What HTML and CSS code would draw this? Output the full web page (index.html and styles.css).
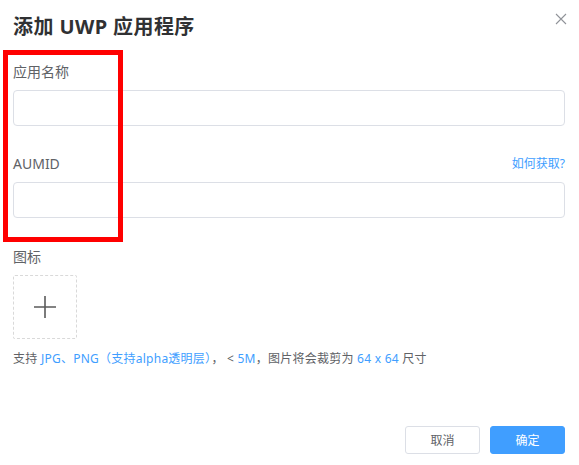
FILE: index.html
```html
<!DOCTYPE html>
<html lang="zh-CN">
<head>
    <meta charset="UTF-8">
    <meta name="viewport" content="width=device-width, initial-scale=1.0">
    <title>添加 UWP 应用程序</title>
    <link rel="stylesheet" href="styles.css">
</head>
<body>

    <div class="dialog">
        <div class="dialog-header">
            <h2 class="dialog-title">添加 UWP 应用程序</h2>
            <button class="close-btn" aria-label="关闭">
                <svg width="12" height="12" viewBox="0 0 12 12">
                    <path d="M1 1 L11 11 M11 1 L1 11" stroke="#909399" stroke-width="1.1" fill="none"/>
                </svg>
            </button>
        </div>

        <div class="form-item">
            <div class="form-label">应用名称</div>
            <input type="text" class="text-input">
        </div>

        <div class="form-item">
            <div class="form-label">
                <span>AUMID</span>
                <a href="#" class="help-link">如何获取?</a>
            </div>
            <input type="text" class="text-input">
        </div>

        <div class="form-item icon-item">
            <div class="form-label">图标</div>
            <div class="uploader">
                <svg width="24" height="24" viewBox="0 0 24 24">
                    <path d="M12 1 V23 M1 12 H23" stroke="#5b5b5b" stroke-width="1.6" fill="none"/>
                </svg>
            </div>
            <p class="tip">支持 <span class="hl">JPG、PNG（支持alpha透明层）</span>， &lt; <span class="hl">5M</span>，图片将会裁剪为 <span class="hl">64 x 64</span> 尺寸</p>
        </div>

        <div class="dialog-footer">
            <button class="btn">取消</button>
            <button class="btn btn-primary">确定</button>
        </div>

        <!-- annotation box -->
        <div class="mark"></div>
    </div>

</body>
</html>
```

FILE: styles.css
```css
body {
    margin: 0;
    padding: 0;
    background: #fff;
    font-family: "Noto Sans", "Noto Sans CJK SC", sans-serif;
    color: #606266;
}
.dialog {
    position: relative;
    padding: 12px 14px 0 13px;
}
.dialog-header {
    display: flex;
    justify-content: space-between;
    align-items: flex-start;
}
.dialog-title {
    margin: 0;
    font-size: 20px;
    line-height: 29px;
    font-weight: bold;
    letter-spacing: 0.4px;
    color: #303133;
}
.close-btn {
    margin: 1px -3px 0 0;
    padding: 0;
    width: 14px;
    height: 14px;
    border: none;
    background: none;
    cursor: pointer;
}
.form-item {
    margin-top: 21px;
}
.form-item + .form-item {
    margin-top: 28px;
}
.form-item.icon-item {
    margin-top: 29px;
}
.form-label {
    display: flex;
    justify-content: space-between;
    align-items: center;
    font-size: 14px;
    line-height: 20px;
    margin-bottom: 8px;
    color: #606266;
}
.help-link {
    color: #409eff;
    font-size: 12px;
    text-decoration: none;
}
.text-input {
    display: block;
    box-sizing: border-box;
    width: 100%;
    height: 36px;
    border: 1px solid #dcdfe6;
    border-radius: 4px;
    outline: none;
    padding: 0 12px;
}
.uploader {
    box-sizing: border-box;
    width: 64px;
    height: 64px;
    border: 1px dashed #d9d9d9;
    border-radius: 2px;
    display: flex;
    align-items: center;
    justify-content: center;
}
.tip {
    margin: 10px 0 0;
    font-size: 12px;
    line-height: 20px;
    letter-spacing: 0.25px;
    color: #606266;
}
.hl {
    color: #409eff;
}
.dialog-footer {
    display: flex;
    justify-content: flex-end;
    gap: 10px;
    margin-top: 57px;
}
.btn {
    width: 75px;
    height: 28px;
    font-family: inherit;
    font-size: 12px;
    border: 1px solid #dcdfe6;
    border-radius: 3px;
    background: #fff;
    color: #606266;
    cursor: pointer;
}
.btn-primary {
    background: #409eff;
    border-color: #409eff;
    color: #fff;
}
.mark {
    position: absolute;
    left: 3px;
    top: 50px;
    width: 110px;
    height: 182px;
    border: 5px solid #ff0000;
}
```
